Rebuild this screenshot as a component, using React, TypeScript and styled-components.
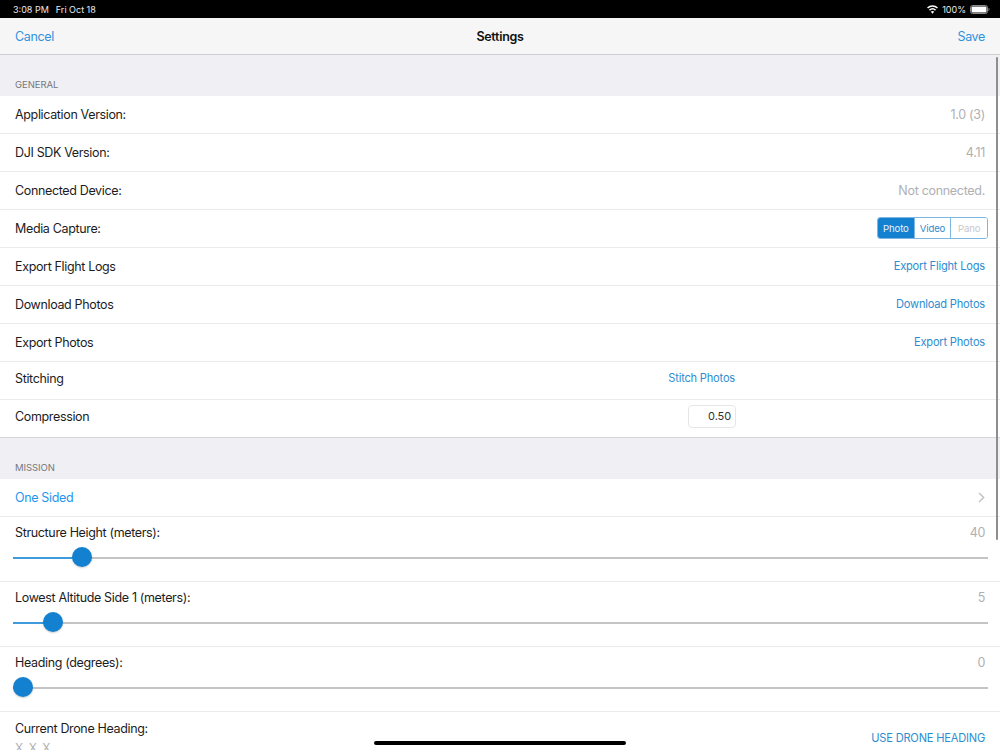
import React from "react";
import styled, { createGlobalStyle } from "styled-components";

const Global = createGlobalStyle`
  html, body { margin: 0; padding: 0; height: 750px; overflow: hidden; background: #fff; }
  * { box-sizing: border-box; }
  #root { height: 750px; }
`;

const Screen = styled.div`
  position: relative;
  width: 1000px;
  height: 750px;
  overflow: hidden;
  display: flex;
  flex-direction: column;
  font-family: Inter, "Liberation Sans", sans-serif;
  font-size: 12.5px;
  letter-spacing: -0.35px;
  color: #1c1c1e;
  background: #efeff4;
`;

const StatusBar = styled.div`
  height: 18px;
  flex: none;
  background: #000;
  color: #e8e8e8;
  display: flex;
  align-items: center;
  justify-content: space-between;
  padding: 0 10px 0 13px;
  font-size: 9px;
  letter-spacing: 0;
`;

const StatusGroup = styled.div<{ $gap: number }>`
  display: flex;
  align-items: center;
  gap: ${(p) => p.$gap}px;
`;

const NavBar = styled.div`
  height: 37px;
  flex: none;
  background: #f6f6f7;
  border-bottom: 1px solid #cfcfd1;
  display: grid;
  grid-template-columns: 1fr auto 1fr;
  align-items: center;
  padding: 0 15px;
`;

const NavButton = styled.span<{ $right?: boolean }>`
  color: #2e93dc;
  justify-self: ${(p) => (p.$right ? "end" : "start")};
`;

const NavTitle = styled.span`
  font-weight: 600;
  letter-spacing: -0.3px;
  color: #111;
`;

const SectionHeader = styled.div`
  height: 41px;
  flex: none;
  display: flex;
  align-items: flex-end;
  padding: 0 15px 6px;
  font-size: 9.5px;
  letter-spacing: -0.05px;
  color: #77777c;
  background: #efeff4;
`;

const Group = styled.div`
  background: #fff;
  flex: none;
`;

const Row = styled.div<{ $last?: boolean; $raised?: boolean }>`
  height: 38px;
  display: flex;
  align-items: center;
  justify-content: space-between;
  padding: 0 15px ${(p) => (p.$raised ? 5 : 1)}px;
  border-bottom: 1px solid ${(p) => (p.$last ? "#d6d6d8" : "#ebebed")};
`;

const GridRow = styled(Row)`
  display: grid;
  grid-template-columns: 1fr 1fr;
  align-items: center;
`;

const Value = styled.span`
  color: #b0b0b3;
  letter-spacing: -0.3px;
`;

const LinkText = styled.span`
  color: #2e8dd0;
  font-size: 11.1px;
  letter-spacing: -0.2px;
`;

const CenterLink = styled(LinkText)`
  justify-self: end;
  margin-right: 250px;
`;

const Segments = styled.div`
  display: flex;
  width: 111px;
  height: 22px;
  margin-right: -3px;
  border: 1px solid #7db8e3;
  border-radius: 3px;
  overflow: hidden;
`;

const Segment = styled.div<{ $active?: boolean; $disabled?: boolean }>`
  flex: 1;
  display: flex;
  align-items: center;
  justify-content: center;
  font-size: 9.6px;
  letter-spacing: -0.15px;
  background: ${(p) => (p.$active ? "#1381d0" : "#fff")};
  color: ${(p) => (p.$active ? "#e8f3fb" : p.$disabled ? "#c9c9cb" : "#2e8dd0")};
  & + & { border-left: 1px solid #7db8e3; }
`;

const NumberBox = styled.div`
  justify-self: end;
  margin-right: 249px;
  width: 48px;
  height: 23px;
  border: 1px solid #e6e6e8;
  border-radius: 4px;
  display: flex;
  align-items: center;
  justify-content: flex-end;
  padding-right: 4px;
  font-size: 11px;
  letter-spacing: -0.1px;
  color: #333;
`;

const MissionLink = styled.span`
  color: #1e96ee;
`;

const SliderRow = styled.div`
  height: 65px;
  padding: 8px 15px 0;
  border-bottom: 1px solid #ebebed;
`;

const SliderHead = styled.div`
  display: flex;
  justify-content: space-between;
  align-items: center;
  height: 14px;
`;

const Track = styled.div`
  position: relative;
  height: 2px;
  margin: 18px -3px 0 -2px;
  background: #c4c4c6;
`;

const TrackFill = styled.div`
  height: 100%;
  background: #3f9bdc;
`;

const Thumb = styled.div`
  position: absolute;
  top: -10px;
  width: 20px;
  height: 20px;
  border-radius: 50%;
  background: #1381d0;
  box-shadow: 0 1px 2px rgba(0, 0, 0, 0.2);
  transform: translateX(-10px);
`;

const HeadingRow = styled.div`
  padding: 9px 15px 0;
  display: flex;
  justify-content: space-between;
  height: 60px;
`;

const Stack = styled.div`
  display: flex;
  flex-direction: column;
  gap: 4px;
`;

const Placeholder = styled.span`
  color: #b0b0b3;
  font-size: 12px;
  letter-spacing: 1px;
`;

const UseHeading = styled(LinkText)`
  margin-top: 10px;
`;

const ScrollIndicator = styled.div`
  position: absolute;
  right: 2px;
  top: 57px;
  width: 2px;
  height: 483px;
  border-radius: 1px;
  background: #8e8e91;
`;

const HomeIndicator = styled.div`
  position: absolute;
  left: 374px;
  bottom: 5px;
  width: 252px;
  height: 4px;
  border-radius: 2px;
  background: #000;
`;

const Chevron = () => (
  <svg width="7" height="11" viewBox="0 0 7 11" fill="none" stroke="#c0c0c3" strokeWidth="1.4">
    <path d="M1 1l4.7 4.5L1 10" />
  </svg>
);

const Wifi = () => (
  <svg width="11" height="9" viewBox="0 0 12 9" fill="#fff">
    <path d="M6 9L4.2 6.9a2.7 2.7 0 0 1 3.6 0L6 9zM3.2 5.8L2.2 4.6a5.7 5.7 0 0 1 7.6 0L8.8 5.8a4.2 4.2 0 0 0-5.6 0zM1.2 3.5L0 2.3a8.8 8.8 0 0 1 12 0l-1.2 1.2a7.1 7.1 0 0 0-9.6 0z" />
  </svg>
);

const Battery = () => (
  <svg width="20" height="9" viewBox="0 0 20 9">
    <rect x="0.5" y="0.5" width="17" height="8" rx="2" fill="none" stroke="#8a8a8a" />
    <rect x="1.5" y="1.5" width="15" height="6" rx="1" fill="#fff" />
    <path d="M18.5 3v3c.6-.2 1-.8 1-1.5s-.4-1.3-1-1.5z" fill="#8a8a8a" />
  </svg>
);

const simpleRows = [
  ["Application Version:", "1.0 (3)"],
  ["DJI SDK Version:", "4.11"],
  ["Connected Device:", "Not connected."],
];

const linkRows = ["Export Flight Logs", "Download Photos", "Export Photos"];

const sliders = [
  { label: "Structure Height (meters):", value: "40", at: 69 },
  { label: "Lowest Altitude Side 1 (meters):", value: "5", at: 40 },
  { label: "Heading (degrees):", value: "0", at: 10 },
];

export default function App() {
  return (
    <Screen>
      <Global />
      <StatusBar>
        <StatusGroup $gap={7}>
          <span>3:08 PM</span>
          <span>Fri Oct 18</span>
        </StatusGroup>
        <StatusGroup $gap={4}>
          <Wifi />
          <span>100%</span>
          <Battery />
        </StatusGroup>
      </StatusBar>
      <NavBar>
        <NavButton>Cancel</NavButton>
        <NavTitle>Settings</NavTitle>
        <NavButton $right>Save</NavButton>
      </NavBar>
      <SectionHeader>GENERAL</SectionHeader>
      <Group>
        {simpleRows.map(([label, value]) => (
          <Row key={label}>
            <span>{label}</span>
            <Value>{value}</Value>
          </Row>
        ))}
        <Row>
          <span>Media Capture:</span>
          <Segments>
            <Segment $active>Photo</Segment>
            <Segment>Video</Segment>
            <Segment $disabled>Pano</Segment>
          </Segments>
        </Row>
        {linkRows.map((label) => (
          <Row key={label}>
            <span>{label}</span>
            <LinkText>{label}</LinkText>
          </Row>
        ))}
        <GridRow $raised>
          <span>Stitching</span>
          <CenterLink>Stitch Photos</CenterLink>
        </GridRow>
        <GridRow $last $raised>
          <span>Compression</span>
          <NumberBox>0.50</NumberBox>
        </GridRow>
      </Group>
      <SectionHeader>MISSION</SectionHeader>
      <Group>
        <Row>
          <MissionLink>One Sided</MissionLink>
          <Chevron />
        </Row>
        {sliders.map((s) => (
          <SliderRow key={s.label}>
            <SliderHead>
              <span>{s.label}</span>
              <Value>{s.value}</Value>
            </SliderHead>
            <Track>
              <TrackFill style={{ width: s.at }} />
              <Thumb style={{ left: s.at }} />
            </Track>
          </SliderRow>
        ))}
        <HeadingRow>
          <Stack>
            <span>Current Drone Heading:</span>
            <Placeholder>X.X.X</Placeholder>
          </Stack>
          <UseHeading>USE DRONE HEADING</UseHeading>
        </HeadingRow>
      </Group>
      <ScrollIndicator />
      <HomeIndicator />
    </Screen>
  );
}
